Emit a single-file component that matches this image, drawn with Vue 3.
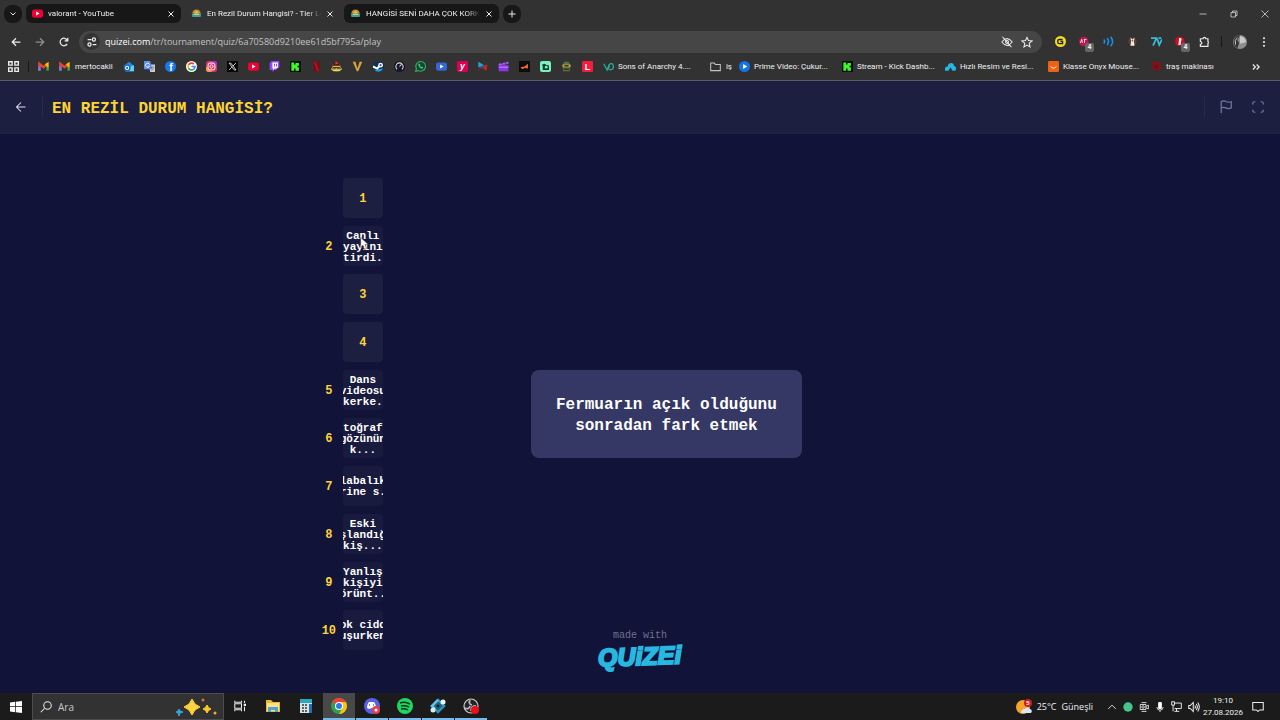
<script setup>
const t = (s, x, y, size, fill, extra = '') =>
  `<text x="${x}" y="${y}" font-size="${size}" fill="${fill}" text-anchor="middle" font-family="Liberation Sans, sans-serif" font-weight="700" ${extra}>${s}</text>`

const icons = {
  youtube: '<rect y="2" width="16" height="12" rx="3" fill="#f00034"/><path d="M6 5l5 3-5 3z" fill="#fff"/>',
  quiz: '<path d="M2 8a6 6 0 0 1 12 0z" fill="#c98a3c"/><path d="M5 7l3-3 3 3z" fill="#f0cf43"/><path d="M1 8h14l-1 5H2z" fill="#3f9d9a"/><path d="M4 8h8v2H4z" fill="#d9e25a"/>',
  gmail: '<path d="M2 14V4l6 5 6-5" fill="none" stroke="#ea4335" stroke-width="3.500"/><path d="M2 14V8" stroke="#5a86e8" stroke-width="3.500"/><path d="M14 14V8" stroke="#34a853" stroke-width="3.500"/><path d="M14 9V4l-3 2" stroke="#fbbc04" stroke-width="3" fill="none"/>',
  outlook: '<path d="M1 7l8-6 7 6v8H3z" fill="#1f8ce0"/><path d="M8 9l8-3v9H4z" fill="#5fd0f5"/><circle cx="6" cy="10" r="5" fill="#1267c4"/><circle cx="6" cy="10" r="2.3" fill="none" stroke="#fff" stroke-width="1.5"/>',
  translate: '<path d="M7 5h9v11H9z" fill="#c9ced6"/><path d="M0 0h9l3 12H0z" fill="#5b8ef0"/><path d="M10 9h5m-3-1v1m-1 5l3-4" stroke="#63718a" fill="none"/><path d="M8 5a3 3 0 1 0 0 2.500H5.500" stroke="#fff" stroke-width="1.300" fill="none"/>',
  facebook: '<circle cx="8" cy="8" r="8" fill="#1877f2"/>' + t('f', 8.5, 14, 15, '#fff'),
  google: '<circle cx="8" cy="8" r="8" fill="#fff"/><g fill="none" stroke-width="2.400"><path d="M11.500 4.500A5 5 0 0 0 3.600 5.700" stroke="#ea4335"/><path d="M3.600 5.700a5 5 0 0 0 0 4.600" stroke="#fbbc05"/><path d="M3.600 10.300a5 5 0 0 0 7.700 1.500" stroke="#34a853"/><path d="M11.300 11.800A5 5 0 0 0 13 8H8" stroke="#4285f4"/></g>',
  instagram: '<rect width="16" height="16" rx="4" fill="#e1306c"/><path d="M0 8v4a4 4 0 0 0 4 4h5z" fill="#fd9a35"/><path d="M8 0h4a4 4 0 0 1 4 4v4z" fill="#a033c9"/><rect x="3" y="3" width="10" height="10" rx="3" fill="none" stroke="#fff" stroke-width="1.400"/><circle cx="8" cy="8" r="2.300" fill="none" stroke="#fff" stroke-width="1.400"/>',
  x: '<rect width="16" height="16" fill="#070707"/><path d="M3 3h2.500l7.500 10h-2.500zM13 3l-4.500 4.500M7 9l-4 4" fill="none" stroke="#ddd" stroke-width="1.300"/>',
  twitch: '<path d="M1 3l3-3h11v9l-5 4H8l-3 3v-3H1z" fill="#9146ff"/><path d="M5 2h8v7l-2 2H8l-2 2v-2H5z" fill="#fff"/><path d="M8 4v4m3-4v4" stroke="#9146ff" stroke-width="1.500"/>',
  kick: '<rect width="16" height="16" fill="#071006"/><path d="M2 2h4v3h2V3h5v4h-2v2h2v5H8v-3H6v3H2z" fill="#40f52c"/>',
  netflix: '<path d="M4 1h8v14H4z" fill="#7e0a12"/><path d="M4 1h3l5 14H9z" fill="#c00d1a"/>',
  pirate: '<circle cx="8" cy="9" r="6" fill="#d7b14a"/><path d="M2 7c2-6 8-8 12 0z" fill="#4a1610"/><path d="M7 0l4 4-5 1z" fill="#e33"/><path d="M3 9h10v2H9l-1-1-1 1H3z" fill="#1b1b16"/><path d="M0 11l4 3h8l4-3" stroke="#e5d36b" stroke-width="1.500" fill="none"/>',
  v: '<path d="M1 1h4l3 10 3-10h4L9 15H7z" fill="#d8a33a"/>',
  steam: '<circle cx="8" cy="8" r="8" fill="#10305c"/><path d="M2 13a8 8 0 0 0 13-2z" fill="#1b9fdb"/><path d="M0 8l6 3 5-5" stroke="#fff" stroke-width="3" fill="none"/><circle cx="11" cy="6" r="3.500" fill="#fff"/><circle cx="11" cy="6" r="1.500" fill="#3b6391"/>',
  gauge: '<circle cx="8" cy="8" r="8" fill="#15172a"/><path d="M4.500 12a5.300 5.300 0 1 1 7 0" fill="none" stroke="#dfe1ea" stroke-width="1.500"/><path d="M8 8l3-3" stroke="#dfe1ea" stroke-width="1.500"/>',
  whatsapp: '<path d="M1 15l1-4a7 7 0 1 1 3 3z" fill="#17452d" stroke="#31b66a" stroke-width="1.500"/><path d="M5 4c-1 3 3 8 6 7l1-2-2-1-1 1-2-2 1-1-1-2z" fill="#45c97b"/>',
  player: '<rect y="2" width="16" height="12" rx="3" fill="#3565d6"/><path d="M6 5l5 3-5 3z" fill="#fff"/>',
  y: '<rect width="16" height="16" rx="2" fill="#d90055"/>' + t('y', 8, 11, 13, '#fff', 'font-style="italic"'),
  play: '<path d="M2 1l11 7-11 7z" fill="#28597b"/><path d="M2 1l8 5-8 3z" fill="#1fa5d6"/><path d="M9 7l6-2-1 9-4-2z" fill="#cf2027"/><path d="M2 9l7 3-7 3z" fill="#691b2c"/>',
  clap: '<path d="M1 4l14-3v3L1 7z" fill="#a768f5"/><path d="M1 6h14v9H1z" fill="#8d35e9"/><path d="M1 9h14" stroke="#c18bff" stroke-width="1.500"/><path d="M5 3l2 2M10 2l2 2" stroke="#4a1c8f" stroke-width="1.500"/>',
  fox: '<rect width="16" height="16" fill="#0c0c0c"/><path d="M2 9l6-1 5-4v7l-5-1-3 2z" fill="#f06b2a"/>',
  green: '<rect width="16" height="16" rx="3" fill="#7bf2bd"/><path d="M3 5l4-1 3 2h3v7H4V8z" fill="#123d34"/><circle cx="9" cy="9" r="2" fill="#7bf2bd"/>',
  turtle: '<path d="M3 5l2-4h6l2 4v10H3z" fill="#587646"/><path d="M2 5h12v4H2z" fill="#bd9847"/><path d="M5 6h6v2H5z" fill="#1d2c1b"/><path d="M4 12h8" stroke="#292c1b" stroke-width="2"/>',
  l: '<rect width="16" height="16" rx="2" fill="#f51c3f"/>' + t('L', 8, 13, 13, '#fff'),
  vd: '<path d="M1 4l5 9 3-8c6-5 9 6 2 8-4 0-3-5-1-6" fill="none" stroke="#27ad97" stroke-width="1.800"/>',
  folder: '<path d="M1 3h5l2 2h7v9H1z" fill="none" stroke="#c5c5c5" stroke-width="1.500"/>',
  prime: '<circle cx="8" cy="8" r="8" fill="#1474e8"/><path d="M6 4.500l6 3.500-6 3.500z" fill="#fff"/>',
  cloud: '<path d="M0 14c-1-5 2-6 4-6 0-6 9-7 9-1 3 1 4 4 2 7h-4l-3-5-3 5z" fill="#22b9e6"/>',
  bag: '<rect width="16" height="16" rx="2" fill="#ef6212"/><path d="M4 8c2 3 6 3 8 0" fill="none" stroke="#fff" stroke-width="1.400"/>',
  red: '<path d="M8 0l3 2 4 1-1 4 1 5-5 1-3 2-3-3-4-2 2-4-1-4 5-1z" fill="#83111c"/><circle cx="8" cy="8" r="3" fill="#61141c"/>',
  yellowDisc: '<circle cx="8" cy="8" r="8" fill="#f3dd24"/><path d="M11 5H6a2 2 0 0 0-2 2v2a2 2 0 0 0 2 2h5V8H8" fill="none" stroke="#222" stroke-width="2"/>',
  adblock: '<circle cx="7" cy="8" r="7" fill="#c4144e"/><path d="M2 10l2-5 1 5m2-5h4M8 5v5" fill="none" stroke="#fff" stroke-width="1.200"/>',
  waves: '<g fill="none" stroke="#1695e8" stroke-width="2.200"><path d="M1 5q3 3 0 6M6 3q4 5 0 10M11 1q6 7 0 14"/></g>',
  mask: '<circle cx="8" cy="8" r="6" fill="#60412f"/><path d="M5 2l3 3 3-3-1 6 1 6H5l1-6z" fill="#efeae4"/><path d="M7 7h2" stroke="#27221f" stroke-width="1.500"/>',
  seven: '<path d="M0 3h8L3 14M9 4l3 9 4-8M11 3h4" fill="none" stroke="#35bfdd" stroke-width="2.500"/>',
  redBlock: '<circle cx="7" cy="8" r="7" fill="#d60b20"/><path d="M6 3q5-1 3 4l-1 6H5z" fill="#fff"/>',
  puzzle: '<path d="M2 4h4a2 2 0 0 1 4 0h3v4a2 2 0 0 1 0 3v4H2v-3a2 2 0 0 0 0-4z" fill="none" stroke="#e7e7e7" stroke-width="1.800"/>',
  explorer: '<path d="M1 2h5l2 2h7v10H1z" fill="#e9b92f"/><path d="M2 5h12v8H2z" fill="#ffe083"/><path d="M3 9h10v5h-3v-2H6v2H3z" fill="#4aa4d7"/>',
  calc: '<rect x="2" y="1" width="12" height="14" fill="#dce2e6"/><path d="M2 1h12v4H2z" fill="#27a9c4"/><path d="M4 7h2m1 0h2m-5 3h2m1 0h2m-5 3h2m1 0h2" stroke="#566" stroke-width="2"/><path d="M11 6h3v9h-3z" fill="#276eb1"/>',
  chrome: '<circle cx="8" cy="8" r="8" fill="#2ba24c"/><path d="M1.100 4A8 8 0 0 1 15 4.200L8 8z" fill="#ea4335"/><path d="M8 4h6.900A8 8 0 0 1 8 16l3.500-6z" fill="#fbc116"/><circle cx="8" cy="8" r="4" fill="#fff"/><circle cx="8" cy="8" r="3" fill="#3379e8"/>',
  discord: '<circle cx="8" cy="8" r="8" fill="#5661e8"/><path d="M3 10c0-3 1-5 2-6h5c1 1 2 3 2 6l-2 1-2-1-3 1z" fill="#fff"/><path d="M5 7h1m3 0h1" stroke="#5661e8" stroke-width="1.500"/><circle cx="12" cy="12" r="4" fill="#e73e4c"/><circle cx="12" cy="12" r="1.500" fill="#fff"/>',
  spotify: '<circle cx="8" cy="8" r="8" fill="#1ed760"/><path d="M3 5q5-2 10 1M4 8q4-1 8 1M4 11q4-1 7 1" fill="none" stroke="#12331d" stroke-width="1.500"/>',
  copilot: '<g fill="none" stroke-width="2.500"><path d="M8 2l6 6-6 6-6-6z" stroke="#2a94bc"/><path d="M8 2L2 8l3 3" stroke="#64bfe1"/><path d="M8 5l3 3-3 3-3-3z" stroke="#1a6c92" stroke-width="1.500"/></g><circle cx="3" cy="12" r="2.500" fill="#d9ecf1"/><circle cx="13" cy="4" r="2.500" fill="#eef8fc"/>',
  obs: '<circle cx="8" cy="8" r="7" fill="#232326" stroke="#cfcfd2" stroke-width="1.200"/><path d="M7 2q-2 4 2 5M2 10q4 2 5-2M8 13q0-5 5-5" fill="none" stroke="#b7b7bb" stroke-width="1.800"/><circle cx="12" cy="12" r="4" fill="#f00c19"/>',
  weather: '<circle cx="7" cy="8" r="7" fill="#f5a52b"/><path d="M5 14q0-4 4-4 2-3 5 0 3 1 1 4z" fill="#d8e7fb"/><circle cx="12" cy="4" r="4" fill="#c81f25"/>' + t('5', 12, 6, 6, '#fff')
}

const tabs = [
  { icon: 'youtube', title: 'valorant - YouTube' },
  { icon: 'quiz', title: 'En Rezil Durum Hangisi? - Tier List', active: true },
  { icon: 'quiz', title: 'HANGİSİ SENİ DAHA ÇOK KORKUTUR' }
]
const pins = ['outlook', 'translate', 'facebook', 'google', 'instagram', 'x', 'youtube', 'twitch', 'kick', 'netflix', 'pirate', 'v', 'steam', 'gauge', 'whatsapp', 'player', 'y', 'play', 'clap', 'fox', 'green', 'turtle', 'l']
const marks = [
  { icon: 'vd', label: 'Sons of Anarchy 4....' },
  { icon: 'folder', label: 'iş', size: 'small' },
  { icon: 'prime', label: 'Prime Video: Çukur...' },
  { icon: 'kick', label: 'Stream - Kick Dashb...' },
  { icon: 'cloud', label: 'Hızlı Resim ve Resi...' },
  { icon: 'bag', label: 'Klasse Onyx Mouse...' },
  { icon: 'red', label: 'traş makinası', size: 'medium' }
]
const extensions = [
  { icon: 'yellowDisc' }, { icon: 'adblock', count: 4 }, { icon: 'waves' }, { icon: 'mask' },
  { icon: 'seven' }, { icon: 'redBlock', count: 4 }, { icon: 'puzzle' }
]
const slots = [
  [], ['Canlı', 'yayını', 'tirdi.'], [], [], ['Dans', 'videosu', 'kerke.'],
  ['toğraf', 'gözünün', 'k...'], ['labalık', 'rine s.'], ['Eski', 'şlandığ', 'kiş...'],
  ['Yanlış', 'kişiyi', 'örünt..'], ['ok cidd', 'uşurken']
]
const apps = [
  { icon: 'explorer' }, { icon: 'calc' }, { icon: 'chrome', open: true, active: true }, { icon: 'discord', open: true },
  { icon: 'spotify', open: true }, { icon: 'copilot', open: true }, { icon: 'obs', open: true }
]
</script>

<template>
  <div class="screen">
    <div class="tabs">
      <button class="round" aria-label="Sekme ara"><svg class="i8" viewBox="0 0 16 16"><path class="line" d="M3 5l5 5 5-5" /></svg></button>
      <div v-for="tab in tabs" :key="tab.title" class="tab" :class="{ active: tab.active }">
        <svg class="i11" viewBox="0 0 16 16" v-html="icons[tab.icon]"></svg>
        <span class="tab-title">{{ tab.title }}</span>
        <button class="close" aria-label="Kapat"><svg class="i8" viewBox="0 0 16 16"><path class="line" d="M3 3l10 10M13 3L3 13" /></svg></button>
      </div>
      <button class="round" aria-label="Yeni sekme"><svg class="i8" viewBox="0 0 16 16"><path class="line" d="M8 1v14M1 8h14" /></svg></button>
      <div class="window-buttons">
        <button aria-label="Küçült"><svg class="i8" viewBox="0 0 16 16"><path class="line thin" d="M1 8h14" /></svg></button>
        <button aria-label="Geri yükle"><svg class="i8" viewBox="0 0 16 16"><path class="line thin" d="M2 5h9v9H2zM5 5V2h9v9h-3" /></svg></button>
        <button aria-label="Pencereyi kapat"><svg class="i8" viewBox="0 0 16 16"><path class="line thin" d="M1 1l14 14M15 1L1 15" /></svg></button>
      </div>
    </div>

    <div class="toolbar">
      <button class="nav" aria-label="Geri"><svg class="i10" viewBox="0 0 16 16"><path class="line" d="M15 8H2M8 2L2 8l6 6" /></svg></button>
      <button class="nav dim" aria-label="İleri"><svg class="i10" viewBox="0 0 16 16"><path class="line" d="M1 8h13M8 2l6 6-6 6" /></svg></button>
      <button class="nav" aria-label="Yenile"><svg class="i10" viewBox="0 0 16 16"><path class="line" d="M13 11a6 6 0 1 1 0-6M14 1v5H9" /></svg></button>
      <div class="address">
        <button class="site" aria-label="Site bilgileri"><svg class="i10" viewBox="0 0 16 16"><path class="line" d="M7 4H1M9 12h6" /><circle class="line" cx="11" cy="4" r="2.500" /><circle class="line" cx="4" cy="12" r="2.500" /></svg></button>
        <a class="url" href="#"><b>quizei.com</b>/tr/tournament/quiz/6a70580d9210ee61d5bf795a/play</a>
        <button class="plain" aria-label="Üçüncü taraf çerezleri"><svg class="i12" viewBox="0 0 16 16"><path class="line thin" d="M1 8q7-9 14 0-7 9-14 0M2 1l12 14" /><circle class="line thin" cx="8" cy="8" r="2" /></svg></button>
        <button class="plain" aria-label="Yer işareti"><svg class="i12" viewBox="0 0 16 16"><path class="line thin" d="M8 2l2 4 5 .500-4 3 1 5-4-2.500-4 2.500 1-5-4-3 5-.500z" /></svg></button>
      </div>
      <div class="extensions">
        <button v-for="e in extensions" :key="e.icon" class="ext" :aria-label="e.icon">
          <svg class="i11" viewBox="0 0 16 16" v-html="icons[e.icon]"></svg><span v-if="e.count" class="count">{{ e.count }}</span>
        </button>
      </div>
      <span class="divider"></span>
      <button class="plain profile" aria-label="Profil"><svg class="i14" viewBox="0 0 16 16"><circle cx="8" cy="8" r="8" fill="#8d8d8d" /><path d="M8 0a8 8 0 0 0-3 15l2-6-2-3z" fill="#343434" /><path d="M8 1q6 1 7 7l-7 2z" fill="#c8c8c8" /><path d="M5 3q-4 3-2 8" stroke="#ddd" fill="none" /></svg></button>
      <button class="plain" aria-label="Menü"><svg class="i10" viewBox="0 0 16 16"><g fill="#e8e8e8"><circle cx="8" cy="2" r="1.700" /><circle cx="8" cy="8" r="1.700" /><circle cx="8" cy="14" r="1.700" /></g></svg></button>
    </div>

    <nav class="bookmarks">
      <a href="#" aria-label="Uygulamalar"><svg class="i11" viewBox="0 0 16 16"><path class="line" d="M1 1h5v5H1zM10 1h5v5h-5zM1 10h5v5H1zM10 10h5v5h-5z" /></svg></a>
      <span class="divider"></span>
      <a href="#" aria-label="Gmail"><svg class="i11" viewBox="0 0 16 16" v-html="icons.gmail"></svg></a>
      <a href="#" class="mail"><svg class="i11" viewBox="0 0 16 16" v-html="icons.gmail"></svg>mertocakli</a>
      <div class="pins"><a v-for="p in pins" :key="p" href="#" :aria-label="p"><svg class="i11" viewBox="0 0 16 16" v-html="icons[p]"></svg></a></div>
      <a v-for="m in marks" :key="m.label" href="#" class="mark" :class="m.size"><svg class="i11" viewBox="0 0 16 16" v-html="icons[m.icon]"></svg>{{ m.label }}</a>
      <button class="plain more" aria-label="Diğer yer işaretleri"><svg class="i10" viewBox="0 0 16 16"><path class="line" d="M3 4l4 4-4 4M9 4l4 4-4 4" /></svg></button>
    </nav>

    <header class="header">
      <button class="plain back" aria-label="Geri dön"><svg class="i12" viewBox="0 0 16 16"><path d="M14 8H2M8 2L2 8l6 6" /></svg></button>
      <span class="rule"></span>
      <h1>EN REZİL DURUM HANGİSİ?</h1>
      <span class="rule"></span>
      <button class="plain tool" aria-label="Bildir"><svg class="i14" viewBox="0 0 16 16"><path d="M2.500 15V2q3-2 6 0 3 1 5.500 0v7q-3 1.500-6 0-3-1-5.500 0" /></svg></button>
      <button class="plain tool" aria-label="Tam ekran"><svg class="i14" viewBox="0 0 16 16"><path d="M2 5V4a2 2 0 0 1 2-2h1M11 2h1a2 2 0 0 1 2 2v1M14 11v1a2 2 0 0 1-2 2h-1M5 14H4a2 2 0 0 1-2-2v-1" /></svg></button>
    </header>

    <main class="stage">
      <div class="board">
        <ol class="slots">
          <li v-for="(lines, n) in slots" :key="n" class="row">
            <span class="rank">{{ lines.length ? n + 1 : '' }}</span>
            <button class="slot" :class="{ filled: lines.length }">
              <template v-if="lines.length"><span v-for="l in lines" :key="l" class="line-text">{{ l }}</span></template>
              <span v-else class="rank">{{ n + 1 }}</span>
            </button>
            <svg v-if="n === 1" class="cursor" viewBox="0 0 16 24"><path d="M1 1v18l4-4 3 8 4-2-3-7h6z" fill="#fff" stroke="#333" /></svg>
          </li>
        </ol>
        <div class="card">Fermuarın açık olduğunu<br />sonradan fark etmek</div>
      </div>
      <a class="brand" href="#"><span class="made">made with</span><span class="logo">QUiZEi</span></a>
    </main>

    <footer class="taskbar">
      <button class="start" aria-label="Başlat"><svg class="i12" viewBox="0 0 16 16"><path d="M0 2l7-1v6H0zM8 1l8-1v7H8zM0 8h7v7l-7-1zM8 8h8v8l-8-1z" fill="#fff" /></svg></button>
      <label class="search">
        <svg class="i12" viewBox="0 0 16 16"><circle class="line thin" cx="10" cy="6" r="5" /><path class="line thin" d="M6 10l-5 5" /></svg>
        <input type="text" placeholder="Ara" aria-label="Ara" />
        <svg class="sparkles" viewBox="0 0 42 18"><path d="M17 1q2 6 8 8-6 2-8 8-2-6-8-8 6-2 8-8z" fill="#ffd13d" stroke="#ffd13d" /><path d="M32 7q1 3 4 4-3 1-4 4-1-3-4-4 3-1 4-4z" fill="#ffc928" stroke="#ffc928" /><path d="M4 11l1 2 3 1-3 1-1 3-1-3-2-1 2-1z" fill="#35a5dc" stroke="#35a5dc" /><circle cx="28" cy="2" r="1.500" fill="#ed6a2c" /><circle cx="40" cy="15" r="1.500" fill="#f2b02d" /></svg>
      </label>
      <button class="app" aria-label="Görev görünümü"><svg class="i12" viewBox="0 0 16 16"><path class="line thin" d="M1 1v2h9V1M1 15v-2h9v2M1 5h9v6H1zM14 1v3m0 5v6" /><path d="M13 5h3v3h-3z" fill="#eee" /></svg></button>
      <button v-for="a in apps" :key="a.icon" class="app" :class="{ open: a.open, active: a.active }" :aria-label="a.icon"><svg class="i16" viewBox="0 0 16 16" v-html="icons[a.icon]"></svg></button>
      <button class="weather"><svg class="i16" viewBox="0 0 16 16" v-html="icons.weather"></svg><span>25°C</span><span>Güneşli</span></button>
      <div class="tray">
        <svg class="i10" viewBox="0 0 16 16"><path class="line thin" d="M2 11l6-6 6 6" /></svg>
        <svg class="i10" viewBox="0 0 16 16"><circle cx="8" cy="8" r="7.500" fill="#46c58b" /></svg>
        <svg class="i10" viewBox="0 0 16 16"><path class="line thin" d="M4 1h8M4 15h8M2 4h9v8H2zM11 7l4-2v6l-4-2" /><circle class="line thin" cx="6.500" cy="8" r="2" /></svg>
        <svg class="i10" viewBox="0 0 16 16"><rect x="5" width="6" height="11" rx="2" fill="#fff" /><path class="line thin" d="M3 8q0 5 5 5t5-5M8 13v3" /></svg>
        <svg class="i11" viewBox="0 0 16 16"><path class="line thin" d="M5 3h10v8H5M8 11v4M5 15h7M1 1h4v5H1zM3 6v9" /></svg>
        <svg class="i12" viewBox="0 0 16 16"><path class="line thin" d="M1 6h2l4-4v12l-4-4H1zM9 6q2 2 0 4M11 4q3 4 0 8M13 2q4 6 0 12" /></svg>
      </div>
      <time class="clock">19:10<br />27.08.2026</time>
      <button class="notice" aria-label="Bildirimler"><svg class="i12" viewBox="0 0 16 16"><path class="line thin" d="M1 2h14v10h-5l-2 2-2-2H1z" /></svg></button>
    </footer>
  </div>
</template>

<style>
body { margin: 0; background: #111339; }
</style>

<style scoped>
.screen { min-height: 100vh; display: flex; flex-direction: column; font: 8px/12px Roboto, "Noto Sans", sans-serif; color: #f0f0f0; overflow: hidden; }
* { box-sizing: border-box; }
button { border: 0; padding: 0; background: none; color: inherit; font: inherit; display: flex; align-items: center; justify-content: center; flex: none; }
a { color: inherit; text-decoration: none; }
svg { display: block; flex: none; }
.i8 { width: 8px; height: 8px; }
.i10 { width: 10px; height: 10px; }
.i11 { width: 11px; height: 11px; }
.i12 { width: 12px; height: 12px; }
.i14 { width: 14px; height: 14px; }
.i16 { width: 16px; height: 16px; }
.line { fill: none; stroke: #ececec; stroke-width: 2; }
.thin { stroke-width: 1.4; }
.tabs { height: 28px; background: #323232; display: flex; align-items: center; padding: 0 0 1px 4px; gap: 4px; }
.round { width: 18px; height: 18px; border-radius: 8px; background: #171717; }
.tab { width: 155px; height: 19px; border-radius: 6px; background: #171717; display: flex; align-items: center; padding: 0 6px; gap: 5px; }
.tab.active { background: #323232; }
.tab-title { flex: 1; overflow: hidden; white-space: nowrap; mask-image: linear-gradient(to right, #000 88%, transparent); }
.close { width: 8px; height: 12px; }
.window-buttons { margin-left: auto; display: flex; }
.window-buttons button { width: 31px; height: 26px; }
.toolbar { height: 27px; background: #323232; display: flex; align-items: center; padding: 0 11px 0 4px; }
.nav { width: 24px; height: 24px; }
.dim { opacity: .5; }
.address { flex: 1; height: 22px; margin-left: 3px; border-radius: 11px; background: #464646; display: flex; align-items: center; gap: 8px; padding: 0 9px 0 4px; }
.site { width: 17px; height: 17px; border-radius: 50%; background: #343434; }
.url { flex: 1; font: 9px/12px "Open Sans", sans-serif; color: #c3c3c3; margin-left: -3px; }
.url b { font-weight: 400; color: #fff; }
.extensions { display: flex; margin-left: 6px; }
.ext { width: 24px; height: 22px; position: relative; }
.count { position: absolute; right: 2px; bottom: 1px; width: 9px; height: 9px; border-radius: 2px; background: #666; font-size: 7px; line-height: 9px; font-weight: 700; text-align: center; }
.divider { width: 1px; height: 11px; background: #171717; margin: 0 5px; }
.profile { margin: 0 12px 0 6px; }
.bookmarks { height: 26px; background: #323232; border-bottom: 1px solid #5c5c68; display: flex; align-items: center; padding: 0 19px 2px 8px; white-space: nowrap; }
.bookmarks .divider { margin: 0 9px; }
.mail { display: flex; align-items: center; gap: 5px; margin: 0 10px; width: 54px; flex: none; }
.pins { width: 37.5%; display: flex; justify-content: space-between; flex: none; }
.mark { width: 103px; display: flex; align-items: center; gap: 4px; flex: none; }
.pins + .mark { width: 107px; margin-left: 10px; }
.mark.small { width: 29px; gap: 5px; }
.mark.medium { width: 72px; }
.more { margin-left: auto; }
.header { height: 53px; background: #1d1f41; border-bottom: 1px solid #1f2144; display: flex; align-items: center; padding: 0 15px; }
.header svg path { fill: none; stroke: #dfe0ef; stroke-width: 1.4; }
.rule { width: 1px; height: 20px; background: #292b4b; }
.back + .rule { margin: 0 9px 0 15px; }
h1 { margin: 0 auto 0 0; padding-top: 3px; font: 700 16px/22px "Liberation Mono", monospace; color: #fcd535; }
.tool { margin-left: 14px; }
.tool + .tool { margin-left: 18px; }
.header .tool svg path { stroke: #75779a; }
.stage { flex: 1; display: grid; background: #111339; font-family: "Liberation Mono", monospace; }
.board, .brand { grid-area: 1 / 1; }
.board { display: flex; align-items: center; padding-left: 24.6%; gap: 148px; }
.slots { list-style: none; margin: 0; padding: 0; display: flex; flex-direction: column; gap: 8px; }
.row { display: flex; align-items: center; position: relative; }
.rank { width: 28px; padding-top: 3px; text-align: center; color: #fcd535; font-size: 12px; line-height: 16px; font-weight: 700; }
.slot { width: 40px; height: 40px; border-radius: 4px; background: #1d1f41; overflow: hidden; flex-direction: column; }
.slot.filled { background: #181a3e; padding-top: 3px; }
.line-text { color: #fff; font-size: 11px; line-height: 11px; font-weight: 700; white-space: nowrap; }
.cursor { position: absolute; left: 45px; top: 11px; width: 9px; height: 13px; }
.card { padding: 25px 23px 21px; border-radius: 8px; background: #353864; color: #fff; font-size: 16px; line-height: 21px; font-weight: 700; text-align: center; min-width: 271px; }
.brand { justify-self: center; align-self: end; display: flex; flex-direction: column; align-items: center; margin-bottom: 23px; }
.made { font-size: 10px; line-height: 12px; color: #70728f; }
.logo { font: italic 700 25px/28px "Liberation Sans", sans-serif; color: #27b7e0; -webkit-text-stroke: 2px #27b7e0; transform: rotate(-2deg); }
.taskbar { height: 27px; background: #1b1b1b; display: flex; align-items: stretch; }
.start { width: 32px; }
.search { width: 192px; background: #323232; border: 1px solid #4c4c4c; display: flex; align-items: center; padding: 0 6px 0 7px; gap: 6px; }
.search input { flex: 1; min-width: 0; border: 0; padding: 0; background: none; color: #ddd; font: 10px/14px "Open Sans", sans-serif; outline: 0; }
.search input::placeholder { color: #c8c8c8; opacity: 1; }
.sparkles { width: 42px; height: 18px; }
.app { width: 32px; border-bottom: 2px solid transparent; }
.app + .app { margin-left: 1px; }
.app.open { border-bottom-color: #76b9ed; }
.app.active { background: #484848; }
.weather { margin-left: auto; gap: 5px; font: 9px/12px "Open Sans", sans-serif; white-space: nowrap; }
.tray { display: flex; align-items: center; gap: 6px; margin-left: 14px; }
.clock { width: 46px; text-align: center; line-height: 12px; align-self: center; }
.notice { width: 24px; margin-right: 10px; }
</style>
